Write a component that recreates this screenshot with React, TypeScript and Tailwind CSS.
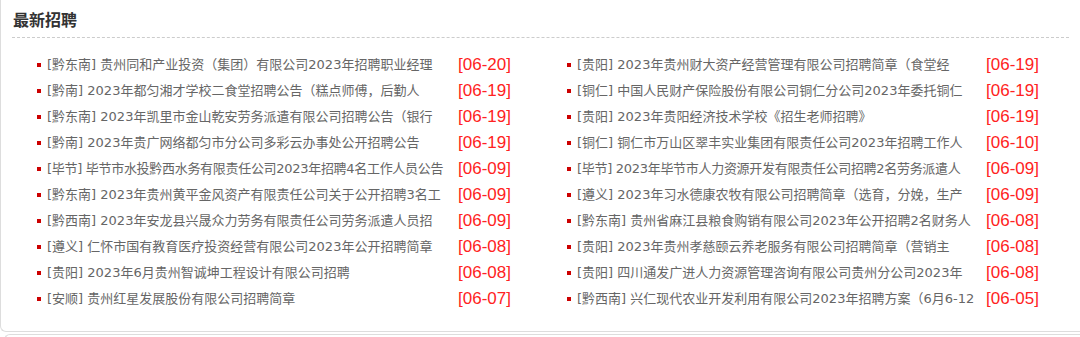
import React from "react";

type Item = { region: string; title: string; date: string; tight?: boolean };

const left: Item[] = [
  { region: "黔东南", title: "贵州同和产业投资（集团）有限公司2023年招聘职业经理", date: "06-20" },
  { region: "黔南", title: "2023年都匀湘才学校二食堂招聘公告（糕点师傅，后勤人", date: "06-19" },
  { region: "黔东南", title: "2023年凯里市金山乾安劳务派遣有限公司招聘公告（银行", date: "06-19" },
  { region: "黔南", title: "2023年贵广网络都匀市分公司多彩云办事处公开招聘公告", date: "06-19" },
  { region: "毕节", title: "毕节市水投黔西水务有限责任公司2023年招聘4名工作人员公告", date: "06-09", tight: true },
  { region: "黔东南", title: "2023年贵州黄平金风资产有限责任公司关于公开招聘3名工", date: "06-09" },
  { region: "黔西南", title: "2023年安龙县兴晟众力劳务有限责任公司劳务派遣人员招", date: "06-09" },
  { region: "遵义", title: "仁怀市国有教育医疗投资经营有限公司2023年公开招聘简章", date: "06-08" },
  { region: "贵阳", title: "2023年6月贵州智诚坤工程设计有限公司招聘", date: "06-08" },
  { region: "安顺", title: "贵州红星发展股份有限公司招聘简章", date: "06-07" },
];

const right: Item[] = [
  { region: "贵阳", title: "2023年贵州财大资产经营管理有限公司招聘简章（食堂经", date: "06-19" },
  { region: "铜仁", title: "中国人民财产保险股份有限公司铜仁分公司2023年委托铜仁", date: "06-19" },
  { region: "贵阳", title: "2023年贵阳经济技术学校《招生老师招聘》", date: "06-19" },
  { region: "铜仁", title: "铜仁市万山区翠丰实业集团有限责任公司2023年招聘工作人", date: "06-10" },
  { region: "毕节", title: "2023年毕节市人力资源开发有限责任公司招聘2名劳务派遣人", date: "06-09", tight: true },
  { region: "遵义", title: "2023年习水德康农牧有限公司招聘简章（选育，分娩，生产", date: "06-09" },
  { region: "黔东南", title: "贵州省麻江县粮食购销有限公司2023年公开招聘2名财务人", date: "06-08" },
  { region: "贵阳", title: "2023年贵州孝慈颐云养老服务有限公司招聘简章（营销主", date: "06-08" },
  { region: "贵阳", title: "四川通发广进人力资源管理咨询有限公司贵州分公司2023年", date: "06-08" },
  { region: "黔西南", title: "兴仁现代农业开发利用有限公司2023年招聘方案（6月6-12", date: "06-05" },
];

function Row({ item, dateGap }: { item: Item; dateGap: string }) {
  return (
    <li className="flex items-center h-[26px]">
      <span className="w-[4px] h-[4px] bg-[#cc0000] mr-[6px] shrink-0" />
      <span
        className={
          item.tight
            ? "w-[400px] overflow-hidden whitespace-nowrap text-[13px] leading-[26px] text-[#666] shrink-0 tracking-[-0.3px]"
            : "w-[400px] overflow-hidden whitespace-nowrap text-[13px] leading-[26px] text-[#666] shrink-0"
        }
      >
        [{item.region}] {item.title}
      </span>
      <span
        className={dateGap + " text-[17px] leading-[26px] text-[#ff2222] whitespace-nowrap"}
        style={{ fontFamily: '"Liberation Sans", Arial, sans-serif' }}
      >
        [{item.date}]
      </span>
    </li>
  );
}

export default function App() {
  return (
    <div
      className="w-[1080px] h-[337px] bg-white overflow-hidden"
      style={{ fontFamily: '"DejaVu Sans", "Noto Sans CJK SC", sans-serif' }}
    >
      <div className="border-l border-b border-[#dddddd] rounded-bl-[6px] h-[332px]">
        <div className="pl-[12px] pt-[9px] h-[37px]">
          <h2
            className="text-[16px] leading-[20px] font-bold text-[#333]"
            style={{ fontFamily: '"Noto Sans CJK SC", sans-serif' }}
          >
            最新招聘
          </h2>
        </div>
        <div className="mx-[11px] border-t border-dashed border-[#cccccc]" />
        <div className="grid grid-cols-[530px_530px] pl-[36px] pt-[14px]">
          <ul>
            {left.map((it, i) => (
              <Row key={i} item={it} dateGap="ml-[11px]" />
            ))}
          </ul>
          <ul>
            {right.map((it, i) => (
              <Row key={i} item={it} dateGap="ml-[9px]" />
            ))}
          </ul>
        </div>
      </div>
      <div className="mt-[2px] ml-[4px] border-l border-t border-[#dddddd] rounded-tl-[6px] h-[10px]" />
    </div>
  );
}
